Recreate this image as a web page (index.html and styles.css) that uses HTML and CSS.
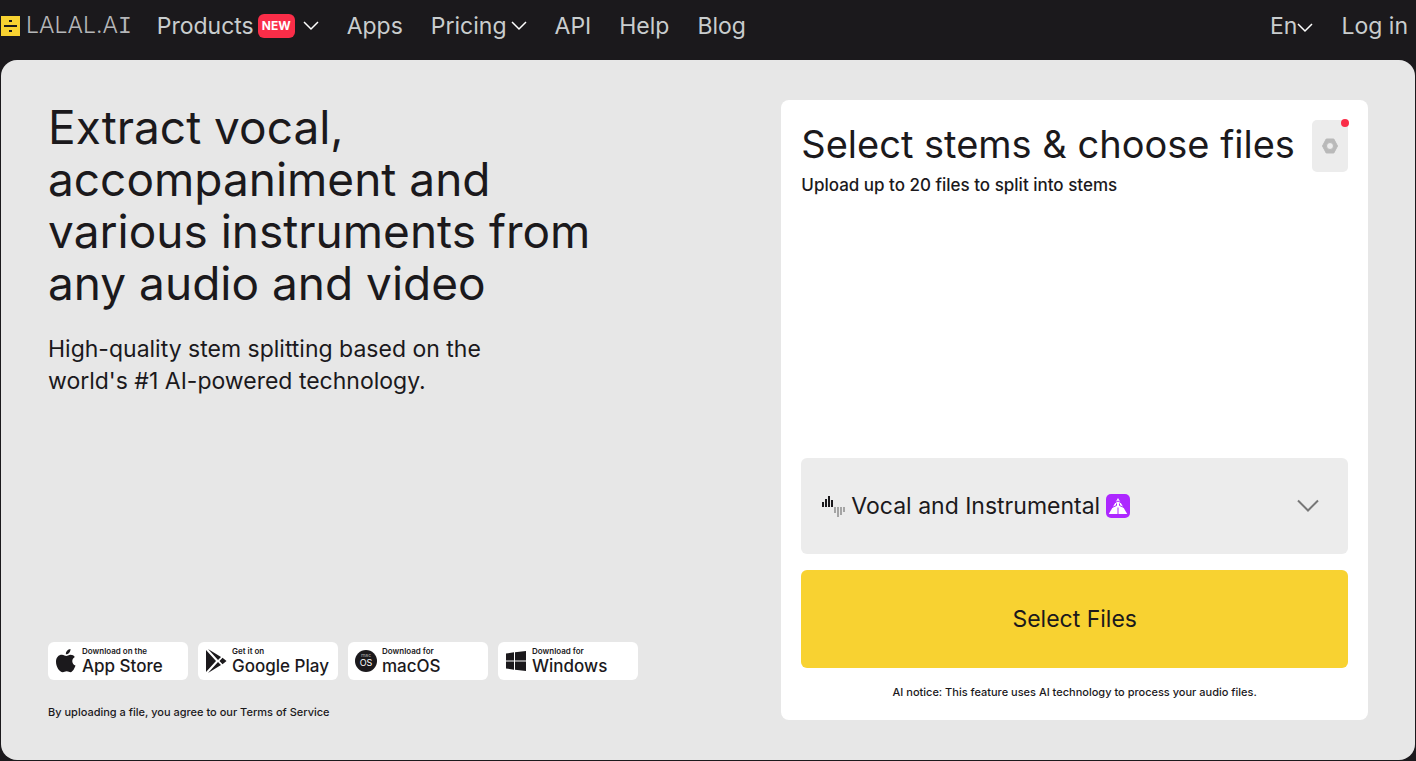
FILE: index.html
```html
<!DOCTYPE html>
<html lang="en">
<head>
  <meta charset="utf-8">
  <meta name="viewport" content="width=device-width, initial-scale=1">
  <title>LALAL.AI</title>
  <link rel="stylesheet" href="styles.css">
</head>
<body>
  <header class="header">
    <a class="logo" href="#">
      <svg width="20" height="20" viewBox="0 0 20 20" aria-hidden="true">
        <path fill="#f8d231" d="M1 0h19v20H1z"/>
        <path fill="#1b191c" d="M4 9h13v2H4zM9 4h3v2H9zM9 14h3v2H9z"/>
      </svg>
      <span class="logo-text">LALAL.A<span class="logo-i">I</span></span>
    </a>
    <nav class="nav">
      <button class="nav-item" type="button">Products
        <span class="new">NEW</span>
        <svg class="arrow arrow-wide" width="16" height="10" viewBox="0 0 16 10" aria-hidden="true"><path d="M1 1l7 7 7-7" stroke-width="1.500"/></svg>
      </button>
      <a class="nav-item" href="#">Apps</a>
      <button class="nav-item" type="button">Pricing
        <svg class="arrow" width="16" height="10" viewBox="0 0 16 10" aria-hidden="true"><path d="M1 1l7 7 7-7" stroke-width="1.500"/></svg>
      </button>
      <a class="nav-item" href="#">API</a>
      <a class="nav-item" href="#">Help</a>
      <a class="nav-item" href="#">Blog</a>
    </nav>
    <div class="user">
      <label class="lang">
        <select class="lang-select" aria-label="Language">
          <option>En</option>
        </select>
        <svg class="arrow" width="16" height="14" viewBox="0 0 16 14" aria-hidden="true"><path d="M1 5l7 7 7-7" stroke-width="1.500"/></svg>
      </label>
      <a class="nav-item" href="#">Log in</a>
    </div>
  </header>

  <main class="main">
    <section class="intro">
      <h1 class="title">Extract vocal,<br>accompaniment and<br>various instruments from<br>any audio and video</h1>
      <p class="lead">High-quality stem splitting based on the<br>world's #1 AI-powered technology.</p>
      <div class="stores">
        <a class="store" href="#">
          <svg width="22" height="26" viewBox="0 0 22 26" aria-hidden="true">
            <path fill="#1b191c" d="M14.500 1c.2 2.900-2 5.300-4.600 5.300C9.700 3.600 11.900 1.200 14.500 1zM10.300 8c1 0 2.300-1.300 4.300-1.300 1.800 0 3.300.9 4.200 2.200-3.700 2.200-3.100 7.200.7 8.700-.8 2.400-2.600 6.500-4.900 6.600-1.400 0-2-.9-3.900-.9s-2.500.9-3.900.9C3.500 24.200 0 18.800 0 13.700c0-4.300 2.500-7 6-7 1.900 0 3.200 1.300 4.300 1.300z"/>
          </svg>
          <span class="store-text"><small>Download on the</small>App Store</span>
        </a>
        <a class="store" href="#">
          <svg width="22" height="26" viewBox="0 0 22 26" aria-hidden="true">
            <path fill="#1b191c" d="M0 2l10 11L0 24zM2 1l13 8-3 3zM2 25l13-8-3-3zM13.500 13l3-3.200L20.500 13l-4 3.200z"/>
          </svg>
          <span class="store-text"><small>Get it on</small>Google Play</span>
        </a>
        <a class="store" href="#">
          <svg width="22" height="26" viewBox="0 0 22 26" aria-hidden="true">
            <circle cx="10" cy="13" r="11" fill="#1b191c"/>
            <text class="mac-small" x="10" y="9" text-anchor="middle">mac</text>
            <text class="mac-os" x="10" y="18" text-anchor="middle">OS</text>
          </svg>
          <span class="store-text"><small>Download for</small>macOS</span>
        </a>
        <a class="store" href="#">
          <svg width="22" height="26" viewBox="0 0 22 26" aria-hidden="true">
            <path fill="#1b191c" d="M0 5.500l8-1.200v8.200H0zM9 4.200L20 3v9.500H9zM0 13.500h8v8.200l-8-1.200zM9 13.500h11V23L9 21.800z"/>
          </svg>
          <span class="store-text"><small>Download for</small>Windows</span>
        </a>
      </div>
      <p class="terms">By uploading a file, you agree to our <a href="#">Terms of Service</a></p>
    </section>

    <section class="card">
      <div class="card-head">
        <div>
          <h2 class="card-title">Select stems &amp; choose files</h2>
          <p class="card-sub">Upload up to 20 files to split into stems</p>
        </div>
        <button class="settings" type="button" aria-label="Settings">
          <svg width="18" height="16" viewBox="0 0 18 16" aria-hidden="true">
            <path fill="#b9b9b9" fill-rule="evenodd" d="M5.200 1h7.600L16.500 8l-3.700 7H5.200L1.500 8zM9 4.500a3.500 3.500 0 1 0 0 7 3.500 3.500 0 0 0 0-7z" stroke="#b9b9b9" stroke-linejoin="round"/>
          </svg>
          <span class="dot"></span>
        </button>
      </div>
      <label class="stem">
        <svg width="24" height="24" viewBox="0 0 24 24" aria-hidden="true">
          <path fill="#1b191c" d="M1 8h2v5H1zM4 5h2v8H4zM7 2h2v11H7zM10 6h2v7h-2z"/>
          <path fill="#a5a5a5" d="M13 13h2v6h-2zM16 13h2v10h-2zM19 13h2v8h-2zM22 13h2v5h-2z"/>
        </svg>
        <select class="stem-select" aria-label="Stem type">
          <option>Vocal and Instrumental</option>
        </select>
        <svg width="24" height="24" viewBox="0 0 24 24" aria-hidden="true">
          <rect width="24" height="24" rx="5" fill="#ad27ff"/>
          <path fill="#fff" d="M12 4L21.200 20H2.800z"/>
          <path fill="none" stroke="#ad27ff" d="M12 13.500V20M8.500 9l3.500-2 3.500 2M6 13.500l4.500-2V9.500M18 13.500l-4.500-2V9.500"/>
        </svg>
        <svg class="stem-arrow" width="24" height="14" viewBox="0 0 24 14" aria-hidden="true"><path d="M2 1.500l10 10 10-10"/></svg>
      </label>
      <button class="select-files" type="button">Select Files</button>
      <p class="notice">AI notice: This feature uses AI technology to process your audio files.</p>
    </section>
  </main>
</body>
</html>
```
FILE: styles.css
```css
* {
  box-sizing: border-box;
}

body {
  margin: 0;
  min-height: 100vh;
  display: flex;
  flex-direction: column;
  background: #1b191c;
  color: #1b191c;
  font-family: Inter, "Liberation Sans", sans-serif;
}

h1, h2, p {
  margin: 0;
  font-weight: 400;
}

a {
  color: inherit;
  text-decoration: none;
}

button, select {
  font-family: inherit;
  color: inherit;
  border: none;
  padding: 0;
  background: none;
  cursor: pointer;
}

select {
  appearance: none;
  field-sizing: content;
}

.header {
  height: 60px;
  padding: 0 8px 8px 0;
  display: flex;
  align-items: center;
  color: #c9cdce;
}

.logo {
  display: flex;
  align-items: center;
  gap: 6px;
  margin-right: 25px;
}

.logo-text {
  font-size: 23px;
  line-height: 32px;
  font-weight: 300;
  color: #b5b6b8;
}

.logo-i {
  font-family: "Liberation Mono", monospace;
}

.nav, .user {
  display: flex;
  align-items: center;
  gap: 28px;
}

.user {
  margin-left: auto;
}

.nav-item, .lang-select {
  display: flex;
  align-items: center;
  gap: 4px;
  font-size: 23px;
  line-height: 32px;
}

.new {
  padding: 0 4px;
  border-radius: 6px;
  background: #fa2d48;
  color: #fff;
  font-size: 12px;
  line-height: 24px;
  font-weight: 700;
}

.arrow {
  fill: none;
  stroke: #fff;
}

.arrow-wide {
  margin-left: 4px;
}

.lang {
  display: flex;
  align-items: center;
}

.main {
  flex: 1;
  margin: 0 1px 1px;
  padding: 40px 47px;
  display: grid;
  grid-template-columns: minmax(0, 5fr) minmax(0, 4fr);
  background: #e7e7e7;
  border-radius: 16px;
}

.intro {
  display: flex;
  flex-direction: column;
}

.title {
  font-size: 46px;
  line-height: 52px;
  padding-top: 1px;
}

.lead {
  margin-top: 24px;
  font-size: 23px;
  line-height: 32px;
}

.stores {
  display: flex;
  gap: 10px;
  margin-top: auto;
}

.store {
  width: 140px;
  height: 38px;
  padding-left: 8px;
  display: flex;
  align-items: center;
  gap: 4px;
  background: #fff;
  border-radius: 6px;
}

.store svg {
  overflow: visible;
}

.store-text {
  font-size: 17px;
  line-height: 20px;
  font-weight: 500;
  white-space: nowrap;
}

.store-text small {
  display: block;
  font-size: 8px;
  line-height: 10px;
  font-weight: 600;
}

.mac-small {
  fill: #aaa;
  font-size: 5px;
}

.mac-os {
  fill: #fff;
  font-size: 9px;
}

.terms {
  margin-top: 24px;
  font-size: 11px;
  line-height: 16px;
  font-weight: 500;
}

.card {
  padding: 20px;
  display: flex;
  flex-direction: column;
  background: #fff;
  border-radius: 8px;
}

.card-head {
  display: flex;
  justify-content: space-between;
  margin-bottom: auto;
}

.card-title {
  font-size: 38px;
  line-height: 48px;
  white-space: nowrap;
}

.card-sub {
  margin-top: 5px;
  font-size: 17px;
  line-height: 24px;
  font-weight: 500;
}

.settings {
  position: relative;
  width: 36px;
  height: 52px;
  flex: none;
  display: flex;
  align-items: center;
  justify-content: center;
  background: #ececec;
  border-radius: 5px;
}

.dot {
  position: absolute;
  top: -1px;
  right: -1px;
  width: 8px;
  height: 8px;
  border-radius: 50%;
  background: #fa2d48;
}

.stem {
  height: 96px;
  padding: 0 28px 0 20px;
  display: flex;
  align-items: center;
  gap: 6px;
  background: #ececec;
  border-radius: 6px;
  cursor: pointer;
}

.stem-select {
  font-size: 23px;
  line-height: 32px;
}

.stem-arrow {
  margin-left: auto;
  fill: none;
  stroke: #777;
  stroke-width: 2;
}

.select-files {
  height: 98px;
  margin-top: 16px;
  background: #f8d231;
  border-radius: 6px;
  font-size: 23px;
}

.notice {
  margin-top: 16px;
  font-size: 11px;
  line-height: 16px;
  font-weight: 500;
  text-align: center;
}
```
